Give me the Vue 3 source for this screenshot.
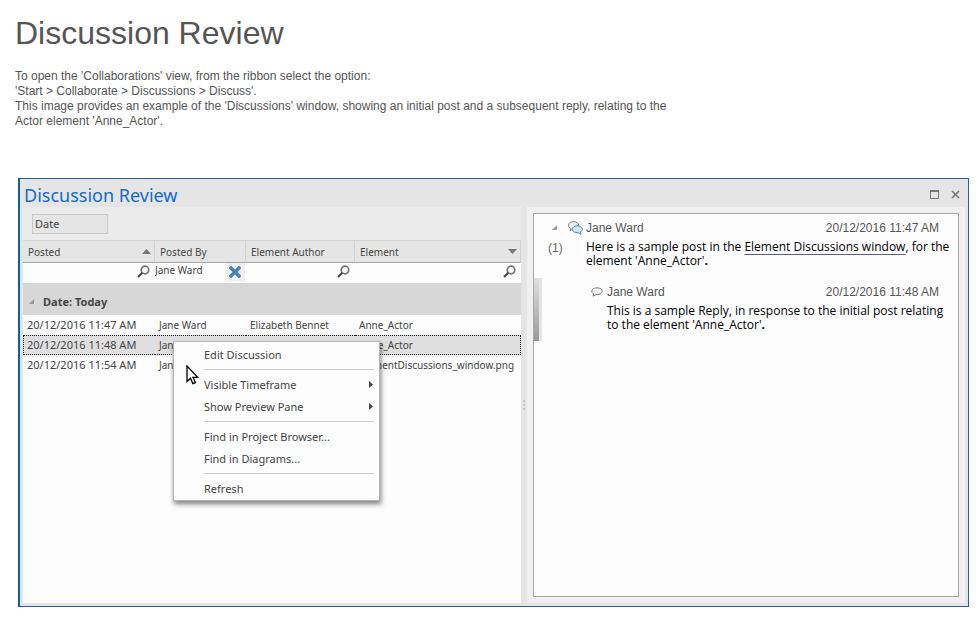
<script setup>
import { ref } from 'vue'

const filters = ref({ posted: '', by: 'Jane Ward', author: '', element: '' })
const selected = ref(1)

const rows = [
  { posted: '20/12/2016 11:47 AM', by: 'Jane Ward', author: 'Elizabeth Bennet', element: 'Anne_Actor' },
  { posted: '20/12/2016 11:48 AM', by: 'Jane Ward', author: 'Elizabeth Bennet', element: 'Anne_Actor' },
  { posted: '20/12/2016 11:54 AM', by: 'Jane Ward', author: '', element: 'ElementDiscussions_window.png' }
]

const menu = [
  [{ label: 'Edit Discussion' }],
  [{ label: 'Visible Timeframe', sub: true }, { label: 'Show Preview Pane', sub: true }],
  [{ label: 'Find in Project Browser...' }, { label: 'Find in Diagrams...' }],
  [{ label: 'Refresh' }]
]
</script>

<template>
  <div class="page">
    <header class="intro">
      <h1>Discussion Review</h1>
      <p>
        To open the 'Collaborations' view, from the ribbon select the option:<br />
        'Start &gt; Collaborate &gt; Discussions &gt; Discuss'.<br />
        This image provides an example of the 'Discussions' window, showing an initial post and a subsequent reply, relating to the Actor element 'Anne_Actor'.
      </p>
    </header>

    <main class="window">
      <div class="titlebar">
        <h2>Discussion Review</h2>
        <button class="win-btn" type="button" aria-label="Maximize">
          <svg width="9" height="9" viewBox="0 0 9 9"><path d="M.5 1v7.500h8V1" fill="none" stroke="#777" /><path d="M0 1h9" stroke="#777" stroke-width="2" /></svg>
        </button>
        <button class="win-btn" type="button" aria-label="Close">
          <svg width="9" height="9" viewBox="0 0 9 9"><path d="M1 1l7 7M8 1L1 8" stroke="#777" stroke-width="1.700" /></svg>
        </button>
      </div>

      <div class="panes">
        <section class="list">
          <div class="groupbar"><button class="group-chip" type="button">Date</button></div>
          <table class="grid">
            <colgroup><col class="c1" /><col class="c2" /><col class="c3" /><col /></colgroup>
            <thead>
              <tr class="heads">
                <th scope="col"><span class="head">Posted<svg width="9" height="5" viewBox="0 0 9 5"><path d="M0 5L4.500 0L9 5z" fill="#777" /></svg></span></th>
                <th scope="col"><span class="head">Posted By</span></th>
                <th scope="col"><span class="head">Element Author</span></th>
                <th scope="col"><span class="head">Element<svg width="9" height="5" viewBox="0 0 9 5"><path d="M0 0h9L4.500 5z" fill="#777" /></svg></span></th>
              </tr>
              <tr class="filters">
                <td v-for="(value, key) in filters" :key="key">
                  <div class="filter">
                    <input v-model="filters[key]" type="text" :aria-label="'Filter ' + key" />
                    <button v-if="key === 'by'" class="clear" type="button" aria-label="Clear filter">
                      <svg width="12" height="12" viewBox="0 0 12 12"><path d="M2 2l8 8M10 2l-8 8" stroke="#4a80b8" stroke-width="3.500" stroke-linecap="square" /></svg>
                    </button>
                    <button v-else class="find" type="button" aria-label="Search">
                      <svg width="13" height="13" viewBox="0 0 13 13"><circle cx="8" cy="5" r="3.800" fill="none" stroke="#777" stroke-width="1.700" /><path d="M5.300 7.700L1 12" stroke="#444" stroke-width="2" /></svg>
                    </button>
                  </div>
                </td>
              </tr>
            </thead>
            <tbody>
              <tr class="group">
                <th colspan="4" scope="rowgroup">
                  <span class="group-label"><svg width="5" height="5" viewBox="0 0 5 5"><path d="M5 0v5H0z" fill="#999" /></svg>Date: Today</span>
                </th>
              </tr>
              <tr v-for="(row, i) in rows" :key="i" class="row" :class="{ selected: selected === i }" @click="selected = i">
                <td>{{ row.posted }}</td>
                <td>{{ row.by }}</td>
                <td>{{ row.author }}</td>
                <td>{{ row.element }}</td>
              </tr>
            </tbody>
          </table>

          <div class="menu" role="menu">
            <div v-for="(section, s) in menu" :key="s" class="menu-section">
              <button v-for="item in section" :key="item.label" type="button" role="menuitem">
                {{ item.label }}
                <svg v-if="item.sub" width="4" height="7" viewBox="0 0 4 7"><path d="M0 0l4 3.500L0 7z" fill="#3d4a3d" /></svg>
              </button>
            </div>
          </div>
          <svg class="cursor" width="13" height="20" viewBox="0 0 13 20"><path d="M1 1v15.500l3.500-3.300 2.400 5.500 2.500-1.100L7 12.300h4.700z" fill="#fff" stroke="#000" stroke-width="1.300" /></svg>
        </section>

        <div class="splitter"><i></i><i></i><i></i></div>

        <section class="preview">
          <div class="thread">
            <article class="post">
              <div class="gutter">
                <svg width="5" height="5" viewBox="0 0 5 5"><path d="M5 0v5H0z" fill="#999" /></svg>
                <span>(1)</span>
              </div>
              <div class="content">
                <div class="meta">
                  <svg class="bubbles" width="15" height="14" viewBox="0 0 15 14">
                    <path d="M5.500.6C2.700.6.500 2.200.500 4.300c0 1.400.9 2.500 2.200 3.100L2.200 9.800 4.800 8h.7c2.900 0 5.100-1.600 5.100-3.700S8.400.6 5.500.6z" fill="#eee" stroke="#857d80" />
                    <path d="M9 4.800C6.300 4.800 4.300 6.200 4.300 8.200s2 3.400 4.700 3.400h1l3 1.800-.6-2.500c1.200-.6 1.900-1.500 1.900-2.700 0-2-2.200-3.400-5.300-3.400z" fill="#cfe3f3" stroke="#5c88ad" />
                  </svg>
                  <span class="name">Jane Ward</span>
                  <time>20/12/2016 11:47 AM</time>
                </div>
                <p>Here is a sample post in the <a href="#">Element Discussions window</a>, for the element 'Anne_Actor'<b>.</b></p>
              </div>
            </article>
            <article class="reply">
              <div class="marker"></div>
              <div class="content">
                <div class="meta">
                  <svg class="bubble" width="12" height="10" viewBox="0 0 12 10"><path d="M6 .8C3 .8.800 2.200.800 4.200c0 1.300.8 2.200 2 2.800L2.200 9.200 5 7.600h1c3 0 5.200-1.400 5.200-3.400S9 .8 6 .8z" fill="#f6f6f6" stroke="#777" /></svg>
                  <span class="name">Jane Ward</span>
                  <time>20/12/2016 11:48 AM</time>
                </div>
                <p>This is a sample Reply, in response to the initial post relating to the element 'Anne_Actor'<b>.</b></p>
              </div>
            </article>
          </div>
        </section>
      </div>
    </main>
  </div>
</template>

<style>
body {
  background: #fff;
}
</style>

<style scoped>
* {
  box-sizing: border-box;
}
.page {
  display: flex;
  flex-direction: column;
  min-height: 100vh;
  padding: 0 10px 10px 18px;
  font-family: "Liberation Sans", Arial, sans-serif;
  color: #555;
}
svg {
  display: block;
  flex: none;
}
button {
  border: 0;
  padding: 0;
  background: none;
  font: inherit;
  color: inherit;
}
.intro {
  height: 178px;
  margin-left: -3px;
  padding-top: 13px;
}
h1 {
  margin: 0;
  font-size: 32px;
  line-height: 40px;
  font-weight: 400;
}
.intro p {
  max-width: 680px;
  margin: 16px 0 0;
  font-size: 12px;
  line-height: 15px;
}
.window {
  flex: 1;
  display: flex;
  flex-direction: column;
  padding: 0 3px 3px;
  border: 1px solid #2b5da5;
  border-left: 2px solid #0b62a0;
  background: #e5e5e5;
  font-family: "Noto Sans", sans-serif;
  font-size: 11px;
  color: #444;
}
.titlebar {
  display: flex;
  align-items: center;
  gap: 12px;
  height: 28px;
  padding: 3px 5px 0 1px;
}
h2 {
  flex: 1;
  margin: 0;
  font-size: 18px;
  line-height: 24px;
  font-weight: 400;
  color: #1769c8;
}
.panes {
  flex: 1;
  display: grid;
  grid-template-columns: minmax(0, 498fr) 6px minmax(0, 438fr);
}
.list {
  position: relative;
  background: #fdfdfd;
}
.groupbar {
  height: 33px;
  padding: 7px 9px;
  background: #ebebeb;
}
.group-chip {
  display: block;
  width: 76px;
  height: 20px;
  padding: 0 0 2px 2px;
  border: 1px solid #c9c9c9;
  background: #e5e5e5;
  text-align: left;
}
.grid {
  width: 100%;
  border-collapse: separate;
  border-spacing: 0;
  table-layout: fixed;
}
.c1 {
  width: 132px;
}
.c2 {
  width: 91px;
}
.c3 {
  width: 109px;
}
th,
td {
  padding: 0;
  text-align: left;
  white-space: nowrap;
}
.heads th {
  height: 23px;
  border: solid #d2d2d2;
  border-width: 1px 1px 1px 0;
  border-bottom-color: #a5a5a5;
  background: #e5e5e5;
  font-size: 10px;
  font-weight: 400;
}
.head {
  display: flex;
  align-items: center;
  justify-content: space-between;
  padding: 0 3px 0 5px;
}
.filters td {
  height: 20px;
}
.filter {
  display: flex;
  height: 20px;
  padding-right: 1px;
}
.filter input {
  flex: 1;
  min-width: 0;
  height: 13px;
  padding: 0;
  border: 0;
  background: none;
  font: inherit;
  font-size: 10px;
  color: inherit;
  outline: 0;
}
.find {
  padding: 0 4px 3px 0;
}
.clear {
  display: grid;
  place-items: center;
  width: 20px;
  height: 18px;
  background: #eee;
}
.group th {
  height: 32px;
  padding: 4px 6px 0;
  background: #d7d7d7;
}
.group-label {
  display: flex;
  align-items: center;
  gap: 9px;
}
.row td {
  height: 20px;
  padding-left: 4px;
  border: 1px solid transparent;
  border-width: 1px 0;
  font-size: 10px;
}
.row td:first-child {
  padding: 0 0 2px 3px;
  border-left-width: 1px;
  font-size: 11px;
}
.row td:last-child {
  border-right-width: 1px;
}
.row.selected td {
  border-color: #111;
  border-style: dotted;
  background: #dfdfdf;
}
.menu {
  position: absolute;
  left: 150px;
  top: 134px;
  width: 207px;
  padding: 2px 5px 0 30px;
  border: 1px solid #b5b5b5;
  background: #fdfdfd;
  box-shadow: 1px 3px 5px rgba(0, 0, 0, 0.5);
}
.menu-section + .menu-section {
  margin-top: 3px;
  padding-top: 4px;
  border-top: 1px solid #d0d0d0;
}
.menu button {
  display: flex;
  align-items: center;
  justify-content: space-between;
  width: 100%;
  height: 22px;
  padding: 0 1px 2px 0;
}
.cursor {
  position: absolute;
  left: 163px;
  top: 158px;
}
.splitter {
  display: flex;
  flex-direction: column;
  align-items: center;
  justify-content: center;
  gap: 2px;
}
.splitter i {
  width: 2px;
  height: 2px;
  background: #c4c4c4;
}
.preview {
  display: flex;
  padding: 6px;
  background: #f0f0f0;
}
.thread {
  flex: 1;
  border: 1px solid #a8a8a8;
  background: #fdfdfd;
}
.post {
  display: flex;
  padding: 4px 4px 10px 14px;
}
.gutter {
  width: 20px;
  padding-top: 7px;
  font-family: "Liberation Sans", Arial, sans-serif;
  font-size: 12px;
  color: #666;
}
.gutter svg {
  margin-left: 4px;
}
.gutter span {
  display: block;
  margin-top: 11px;
}
.content {
  flex: 1;
}
.meta {
  display: flex;
  align-items: center;
  height: 19px;
  padding-right: 15px;
  font-family: "Liberation Sans", Arial, sans-serif;
  font-size: 12px;
  color: #555;
}
.name {
  flex: 1;
}
.bubbles,
.bubble {
  margin-right: 4px;
}
.content p {
  margin: 3px 0 0 18px;
  font-family: "Open Sans", "Noto Sans", sans-serif;
  font-size: 12px;
  line-height: 14px;
  color: #000;
}
.post .bubbles {
  margin-right: 3px;
}
.content a {
  color: inherit;
  text-decoration: underline #5a5aa8 1px;
  text-underline-offset: 3px;
}
.reply {
  display: flex;
  padding-right: 4px;
}
.marker {
  width: 8px;
  height: 63px;
  margin-right: 49px;
  border-right: 3px solid #e4e4e4;
  background: linear-gradient(#e0e0e0, #999);
}
.reply .content {
  padding-top: 4px;
}
.reply .content p {
  margin-left: 16px;
}
</style>
